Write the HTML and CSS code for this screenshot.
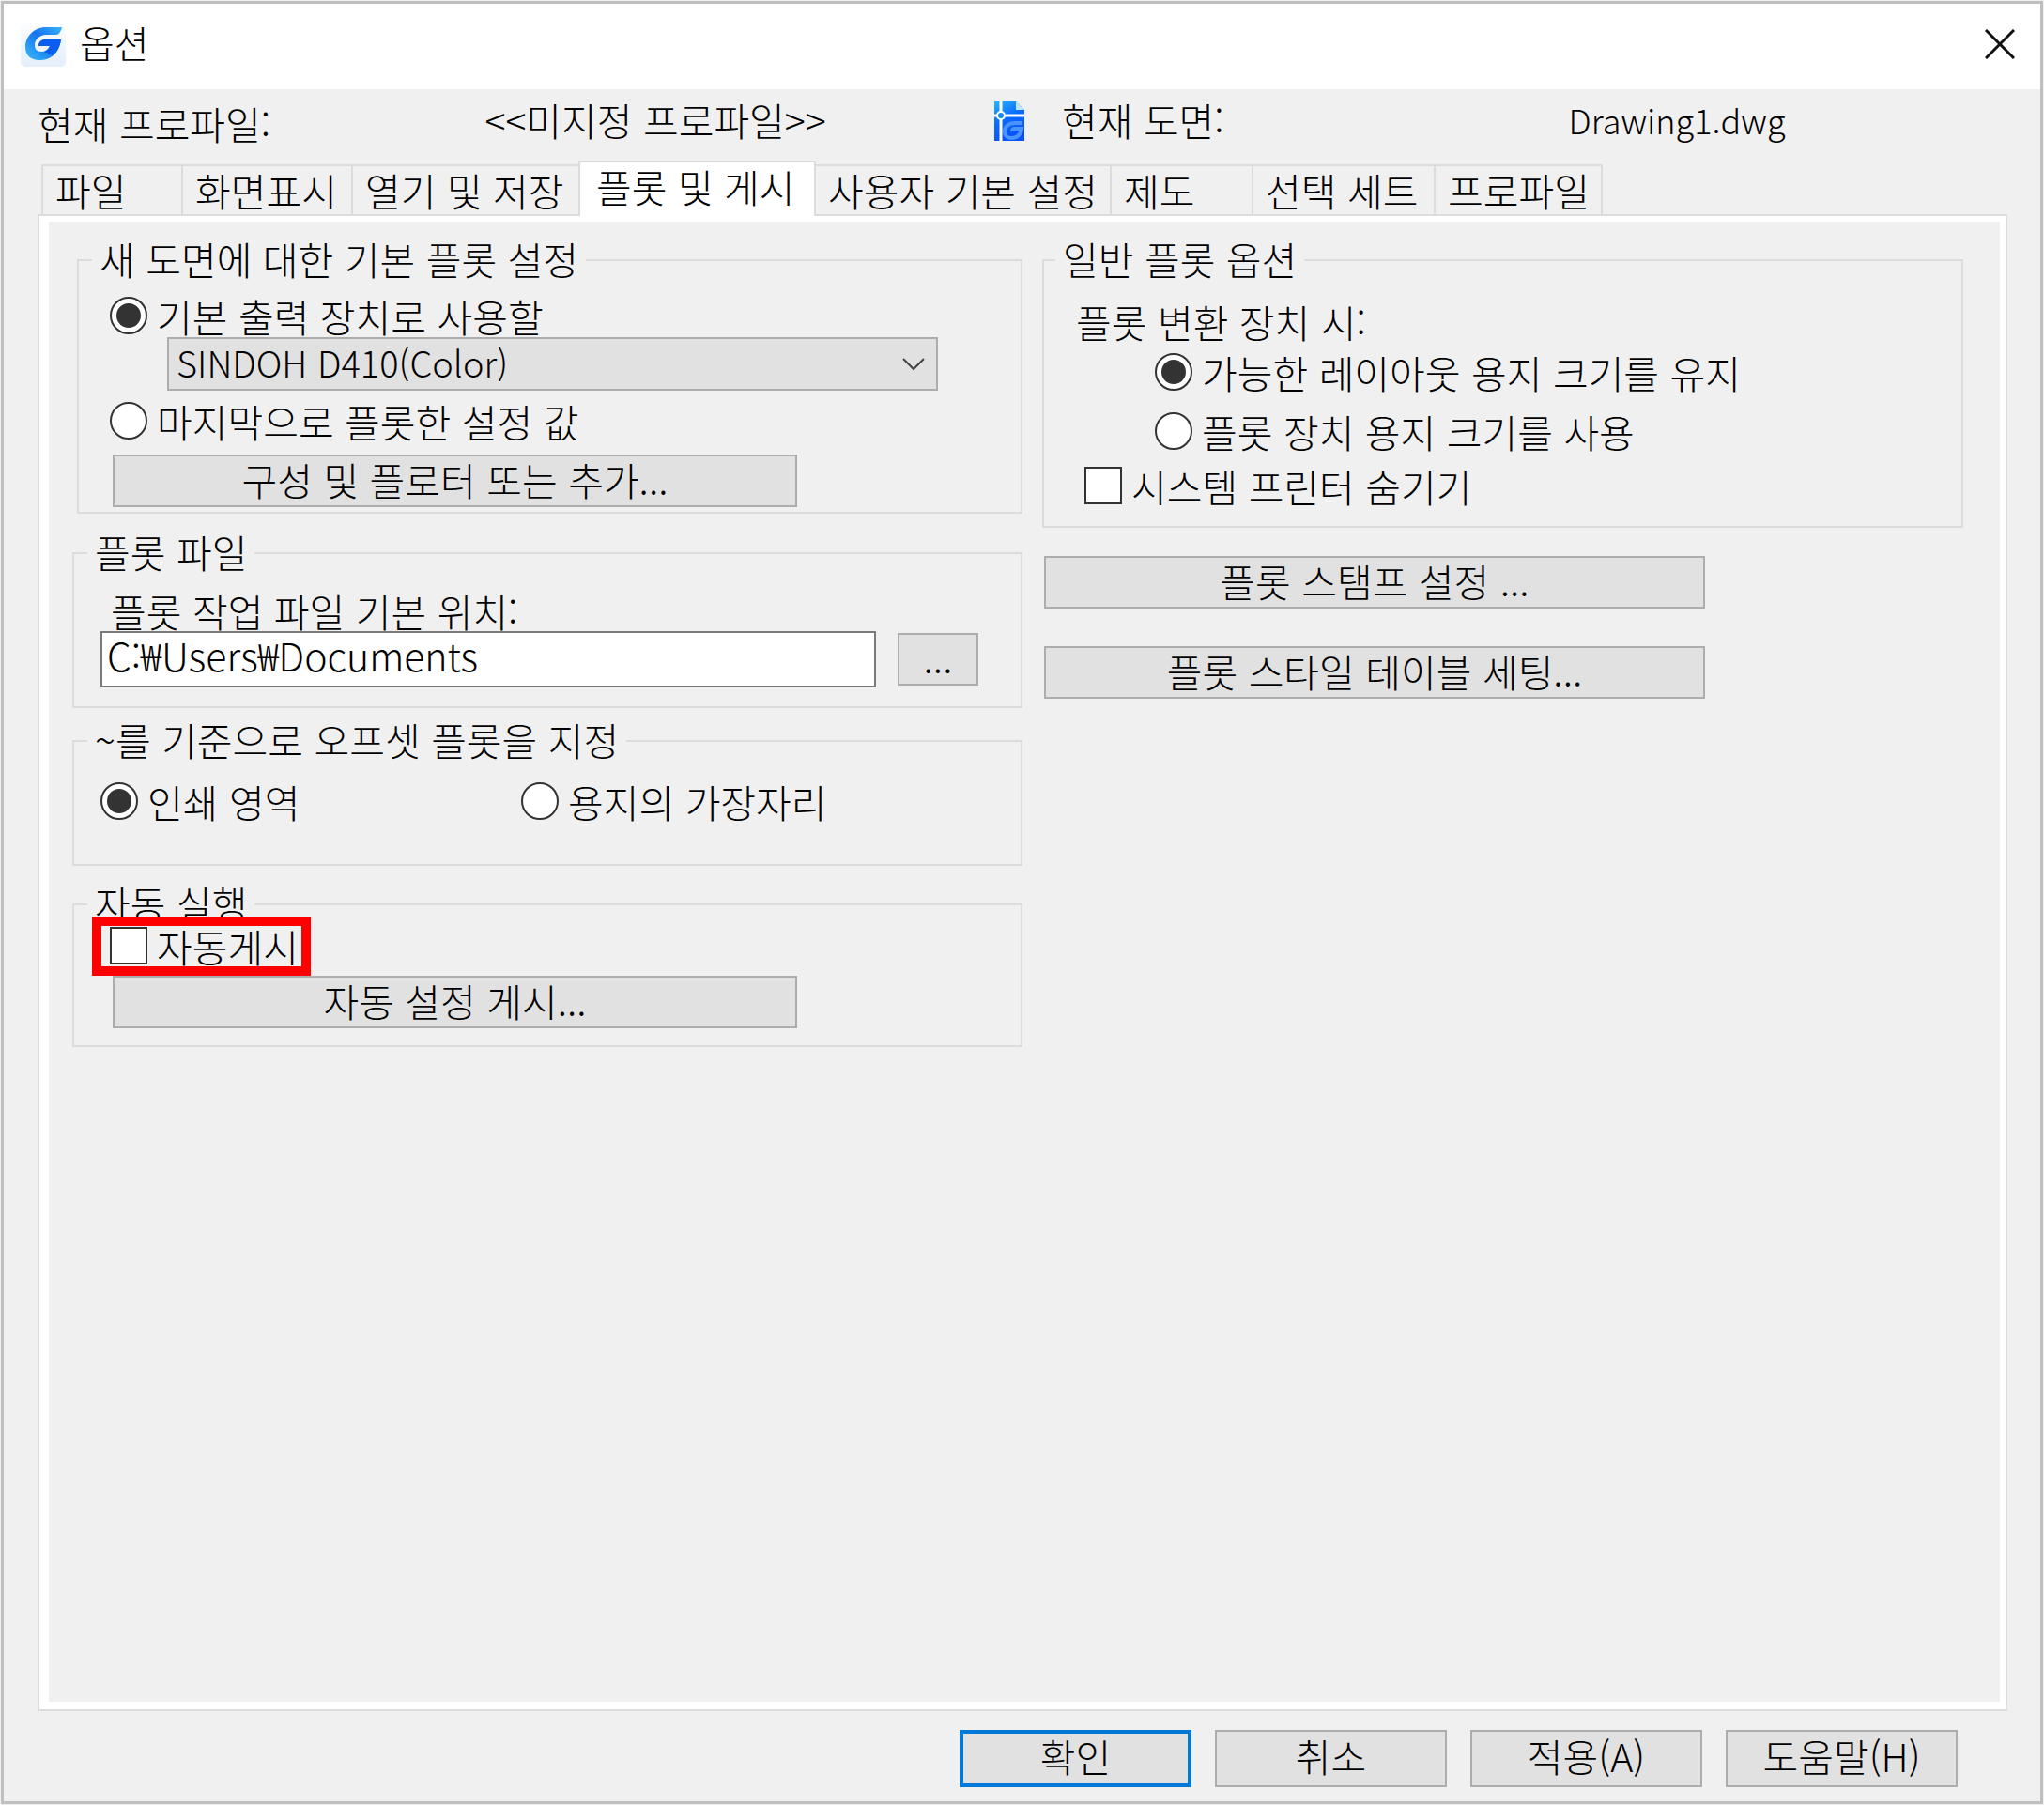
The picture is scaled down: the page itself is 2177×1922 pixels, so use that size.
FILE: index.html
```html
<!DOCTYPE html>
<html lang="ko">
<head>
<meta charset="utf-8">
<meta name="viewport" content="width=device-width, initial-scale=1">
<title>옵션</title>
<link rel="stylesheet" href="styles.css">
</head>
<body>
<form class="dialog" onsubmit="return false">
  <header class="titlebar">
    <svg class="logo" viewBox="0 0 48 48" aria-hidden="true">
      <defs>
        <linearGradient id="tile" x1="0" y1="0" x2="0" y2="1"><stop offset="0" stop-color="#fdfeff"/><stop offset="1" stop-color="#e4eefa"/></linearGradient>
        <linearGradient id="ring" x1="1" y1="0" x2="0" y2="1"><stop offset="0" stop-color="#35b5fb"/><stop offset="0.45" stop-color="#1673f0"/><stop offset="1" stop-color="#38bdf8"/></linearGradient>
      </defs>
      <rect width="48" height="48" rx="5" fill="url(#tile)"/>
      <path d="M44 6H27C14 6 5 16 5 27c0 9 6 14 15 14 12 0 21-7 23-22H26c-4 0-7 3-7 7h12c-2 4-5 6-9 6-5 0-7-3-7-7 0-6 5-11 12-11h11c3 0 5-4 6-8z" fill="url(#ring)"/>
      <path d="M43 19H26c-4 0-7 3-7 7h12c-1 3-3 5-6 6l9 4c5-4 8-9 9-17z" fill="#0b5cf0"/>
    </svg>
    <h1 class="title">옵션</h1>
    <button class="close" type="button" aria-label="닫기">
      <svg viewBox="0 0 32 32" aria-hidden="true"><path d="M1 1l30 30M31 1L1 31" fill="none" stroke="#111" stroke-width="3"/></svg>
    </button>
  </header>

  <div class="summary">
    <span class="summary-label">현재 프로파일:</span>
    <span>&lt;&lt;미지정 프로파일&gt;&gt;</span>
    <svg class="drawing-icon" viewBox="0 0 32 42" aria-hidden="true">
      <defs><linearGradient id="sheet" x1="0" y1="0" x2="0.4" y2="1"><stop offset="0" stop-color="#27b4ff"/><stop offset="0.5" stop-color="#0a6cff"/><stop offset="1" stop-color="#0a50f8"/></linearGradient></defs>
      <path d="M0 0h23l9 9v33H0z" fill="url(#sheet)"/>
      <path d="M23 0l9 9h-9z" fill="#bfe4ff"/>
      <path d="M7 0v42M0 15h32" stroke="#fff" stroke-width="3"/>
      <circle cx="7" cy="15" r="4" fill="#1687ff" stroke="#fff" stroke-width="2"/>
      <path d="M30 23h-8c-7 0-11 4-11 9 0 4 3 7 7 7 6 0 10-3 11-10h-7c-2 0-3 1-3 3" fill="none" stroke="#4a94ff" stroke-width="4"/>
    </svg>
    <span>현재 도면:</span>
    <span class="drawing-name">Drawing1.dwg</span>
  </div>

  <nav class="tabs" role="tablist">
    <button class="tab" type="button" role="tab">파일</button>
    <button class="tab" type="button" role="tab">화면표시</button>
    <button class="tab" type="button" role="tab">열기 및 저장</button>
    <button class="tab tab-active" type="button" role="tab" aria-selected="true">플롯 및 게시</button>
    <button class="tab" type="button" role="tab">사용자 기본 설정</button>
    <button class="tab" type="button" role="tab">제도</button>
    <button class="tab" type="button" role="tab">선택 세트</button>
    <button class="tab" type="button" role="tab">프로파일</button>
  </nav>

  <main class="panel">
    <div class="page">
      <div class="column">
        <fieldset class="group group-defaults">
          <legend>새 도면에 대한 기본 플롯 설정</legend>
          <label class="choice"><input type="radio" name="default" checked>기본 출력 장치로 사용할</label>
          <div class="select-wrap">
            <select aria-label="기본 출력 장치"><option>SINDOH D410(Color)</option></select>
            <svg class="chevron" viewBox="0 0 24 14" aria-hidden="true"><path d="M1 1l11 11L23 1" fill="none" stroke="#444" stroke-width="2"/></svg>
          </div>
          <label class="choice"><input type="radio" name="default">마지막으로 플롯한 설정 값</label>
          <button class="button button-wide" type="button">구성 및 플로터 또는 추가...</button>
        </fieldset>

        <fieldset class="group group-file">
          <legend>플롯 파일</legend>
          <label class="field-label" for="plot-path">플롯 작업 파일 기본 위치:</label>
          <div class="path-row">
            <input class="path" id="plot-path" type="text" value="C:₩Users₩Documents">
            <button class="button browse" type="button">...</button>
          </div>
        </fieldset>

        <fieldset class="group group-offset">
          <legend>~를 기준으로 오프셋 플롯을 지정</legend>
          <label class="choice"><input type="radio" name="offset" checked>인쇄 영역</label>
          <label class="choice"><input type="radio" name="offset">용지의 가장자리</label>
        </fieldset>

        <fieldset class="group group-auto">
          <legend>자동 실행</legend>
          <label class="choice highlighted"><input type="checkbox">자동게시</label>
          <button class="button button-wide" type="button">자동 설정 게시...</button>
        </fieldset>
      </div>

      <div class="column">
        <fieldset class="group group-general">
          <legend>일반 플롯 옵션</legend>
          <p class="hint">플롯 변환 장치 시:</p>
          <div class="nested">
            <label class="choice"><input type="radio" name="paper" checked>가능한 레이아웃 용지 크기를 유지</label>
            <label class="choice"><input type="radio" name="paper">플롯 장치 용지 크기를 사용</label>
          </div>
          <label class="choice"><input type="checkbox">시스템 프린터 숨기기</label>
        </fieldset>
        <div class="actions">
          <button class="button" type="button">플롯 스탬프 설정 ...</button>
          <button class="button" type="button">플롯 스타일 테이블 세팅...</button>
        </div>
      </div>
    </div>
  </main>

  <footer class="footer">
    <button class="button button-default" type="submit">확인</button>
    <button class="button" type="button">취소</button>
    <button class="button" type="button">적용(A)</button>
    <button class="button" type="button">도움말(H)</button>
  </footer>
</form>
</body>
</html>
```

FILE: styles.css
```css
* { box-sizing: border-box; }

body {
  margin: 0;
  padding: 1px;
  background: #f0f0f0;
  color: #000;
  font: 300 41px/40px "Noto Sans CJK KR", sans-serif;
}

button, input, select { font: inherit; color: inherit; }

.dialog {
  display: flex;
  flex-direction: column;
  min-height: calc(100vh - 2px);
  border: 3px solid #bfbfbf;
  background: #f0f0f0;
  white-space: nowrap;
}

/* Title bar */
.titlebar {
  display: flex;
  align-items: center;
  height: 91px;
  padding: 0 27px 6px 18px;
  background: #fff;
}
.logo { width: 48px; height: 48px; }
.title { flex: 1; margin: 0 0 0 15px; padding-bottom: 4px; font-size: 40px; font-weight: 300; }
.close { width: 32px; height: 32px; padding: 0; border: 0; background: none; }
.close svg { display: block; }

/* Profile and drawing summary */
.summary {
  display: grid;
  grid-template-columns: 476fr 542fr 72px 539fr 502fr;
  align-items: center;
  height: 76px;
  padding: 0 0 12px 36px;
}
.summary-label { padding-top: 8px; }
.drawing-icon { width: 32px; height: 42px; margin-top: 4px; }
.drawing-name { font-size: 36px; }

/* Tabs */
.tabs {
  position: relative;
  display: grid;
  grid-template-columns: 149px 181px 242px 251px 315px 151px 194px 178px;
  align-items: end;
  margin: 0 0 -2px 40px;
}
.tab {
  height: 55px;
  margin-right: -2px;
  padding: 0 0 2px 13px;
  border: 2px solid #dcdcdc;
  background: #f0f0f0;
  text-align: left;
}
.tab-active {
  height: 59px;
  padding: 0 0 8px 17px;
  border-bottom: 0;
  background: #fff;
  z-index: 1;
}

.panel {
  display: flex;
  flex: 1;
  margin: 0 35px 0 36px;
  padding: 6px 6px 8px 10px;
  border: 2px solid #dcdcdc;
  background: #fff;
}
.page {
  flex: 1;
  display: grid;
  grid-template-columns: 1012fr 981fr;
  gap: 21px;
  align-items: start;
  padding: 21px 39px 21px 25px;
  background: #f0f0f0;
}

/* Groups */
.group {
  min-width: 0;
  margin: 0;
  border: 2px solid #dcdcdc;
}
.group legend { height: 40px; padding: 0 8px; line-height: 36px; }
.choice { display: flex; align-items: center; gap: 10px; width: max-content; }

.choice input {
  appearance: none;
  display: grid;
  place-items: center;
  width: 40px;
  height: 40px;
  margin: 0;
  border: 2px solid #333;
  background: #fff;
}
.choice input[type="radio"] { border-radius: 50%; }
.choice input[type="radio"]:checked::after {
  content: "";
  width: 26px;
  height: 26px;
  border-radius: 50%;
  background: #333;
}

.group-defaults { margin: 0 0 22px 5px; padding: 19px 88px 5px 33px; }
.group-defaults legend { margin-left: -19px; }
.group-file { margin-bottom: 15px; padding: 23px 45px 20px 28px; }
.group-file legend, .group-offset legend { margin-left: -14px; }
.group-offset { display: flex; margin-bottom: 21px; padding: 24px 28px 47px; }
.group-offset .choice { flex: 0 0 448px; }
.group-auto { padding: 4px 88px 18px 38px; }
.group-auto legend { margin-left: -24px; }
.group-general { padding: 27px 33px 23px 43px; }
.group-general legend { margin-left: -31px; }

.select-wrap { position: relative; margin: 3px 0 12px 61px; }
.select-wrap select {
  appearance: none;
  display: block;
  width: 100%;
  height: 57px;
  padding: 0 8px 4px;
  border: 2px solid #adadad;
  border-radius: 0;
  background: #e1e1e1;
  font-size: 38px;
}
.chevron { position: absolute; right: 14px; top: 22px; width: 24px; height: 14px; }

.button {
  height: 56px;
  padding: 0 8px 4px;
  border: 2px solid #adadad;
  background: #e1e1e1;
}
.button-wide { display: block; width: 729px; max-width: 100%; }
.group-defaults .button-wide { margin: 16px 0 0 3px; }
.group-auto .button-wide { margin: 12px 0 0 3px; }

.field-label { display: block; height: 40px; padding-left: 11px; line-height: 36px; }
.path-row { display: flex; align-items: center; gap: 23px; }
.path {
  flex: 1;
  min-width: 0;
  height: 60px;
  padding: 0 5px 10px;
  border: 2px solid #7a7a7a;
  background: #fff;
}
.browse { width: 86px; }

/* Red callout over the auto-publish option */
.highlighted { position: relative; }
.highlighted::after {
  content: "";
  position: absolute;
  inset: -11px -13px -12px -19px;
  border: 10px solid #f00;
  pointer-events: none;
}

.hint { height: 40px; margin: 0 0 12px -9px; line-height: 36px; }
.nested { display: grid; gap: 23px; margin: 0 0 18px 75px; }
.actions { display: grid; gap: 40px; width: 704px; max-width: 100%; margin: 30px 0 0 2px; }

/* Dialog buttons */
.footer {
  display: flex;
  justify-content: flex-end;
  gap: 25px;
  padding: 20px 88px 15px;
}
.footer .button { width: 247px; height: 61px; padding-bottom: 8px; }
.footer .button-default { border: 4px solid #0078d7; }
```
